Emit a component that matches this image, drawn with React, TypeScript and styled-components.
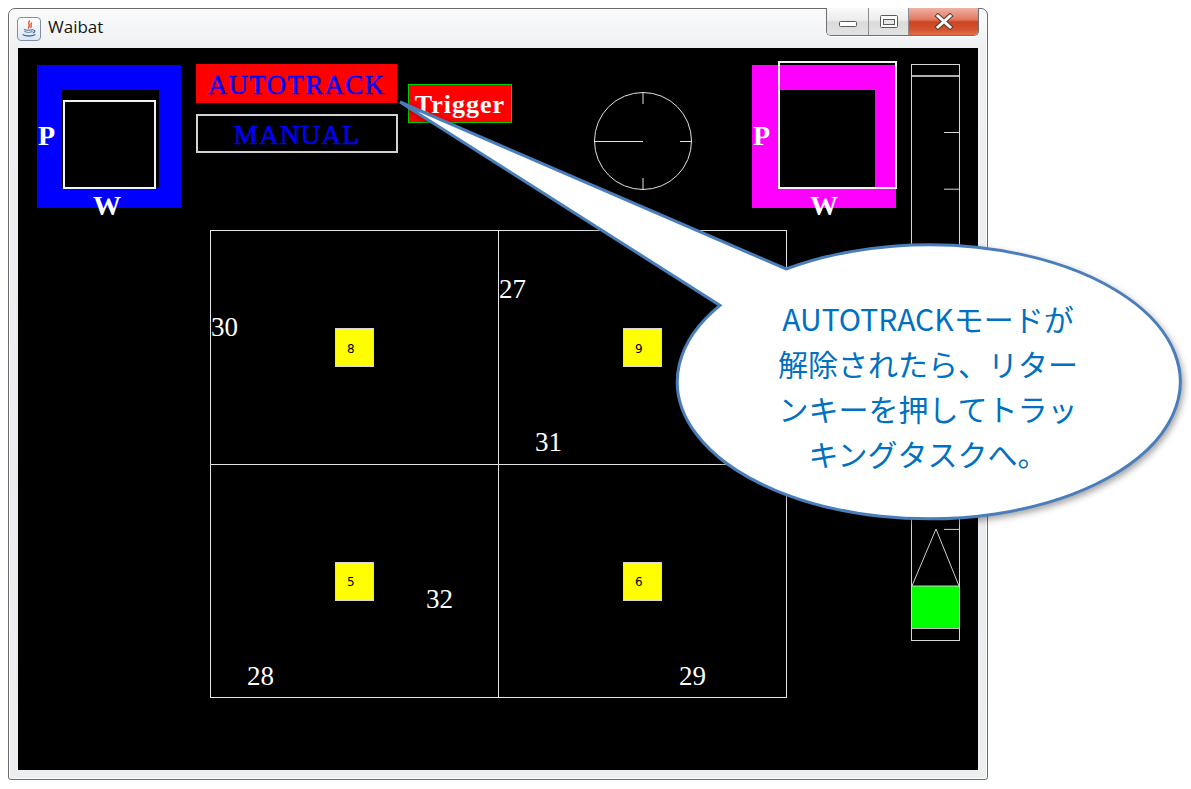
import React from "react";
import styled, { createGlobalStyle } from "styled-components";

const GlobalStyle = createGlobalStyle`
  html, body { margin: 0; padding: 0; background: #ffffff; }
  body { width: 1191px; height: 789px; overflow: hidden; font-family: "Liberation Serif", serif; }
  * { box-sizing: border-box; }
`;

const Page = styled.div`
  position: relative;
  width: 1191px;
  height: 789px;
  padding: 8px 0 0 8px;
`;

const Window = styled.div`
  width: 980px;
  height: 772px;
  display: flex;
  flex-direction: column;
  padding: 0 9px 9px 9px;
  border: 1px solid #6a6a6a;
  border-radius: 7px 7px 3px 3px;
  background: linear-gradient(180deg, #fbfbfc 0%, #eef0f2 5%, #e9ebee 60%, #eceef0 100%);
  box-shadow: inset 0 0 0 1px rgba(255, 255, 255, 0.85);
`;

const TitleBar = styled.div`
  flex: none;
  height: 39px;
  display: flex;
  align-items: flex-start;
`;

const AppIcon = styled.svg`
  flex: none;
  margin: 8px 0 0 -1px;
`;

const Title = styled.span`
  margin-left: 7px;
  font-family: "Open Sans", "Noto Sans", sans-serif;
  font-size: 17px;
  line-height: 35px;
  color: #141414;
`;

const Controls = styled.div`
  margin: -1px -1px 0 auto;
  height: 28px;
  display: flex;
  border: 1px solid #6f6f6f;
  border-top: none;
  border-radius: 0 0 5px 5px;
  overflow: hidden;
  box-shadow: 0 1px 0 rgba(255, 255, 255, 0.9);
`;

const CtrlButton = styled.div<{ $w: number; $close?: boolean }>`
  width: ${(p) => p.$w}px;
  display: flex;
  align-items: center;
  justify-content: center;
  background: ${(p) =>
    p.$close
      ? "linear-gradient(180deg, #efb2a3 0%, #e17a62 42%, #cc4423 52%, #d4532e 80%, #e0714c 100%)"
      : "linear-gradient(180deg, #fafafa 0%, #ececec 45%, #dadada 52%, #e3e3e3 100%)"};
  & + & {
    border-left: 1px solid #8c8c8c;
  }
`;

const Canvas = styled.div`
  position: relative;
  width: 960px;
  height: 722px;
  flex: none;
  background: #000000;
  display: flex;
  align-items: flex-start;
  padding: 17px 0 0 19px;
`;

const LeftArea = styled.div`
  width: 859px;
  display: flex;
  flex-direction: column;
`;

const TopRow = styled.div`
  height: 143px;
  display: flex;
  align-items: flex-start;
`;

const PWBox = styled.div<{ $color: string }>`
  position: relative;
  flex: none;
  width: 144px;
  height: 143px;
  background: ${(p) => p.$color};
`;

const Hole = styled.div<{ $left: number; $w: number }>`
  position: absolute;
  left: ${(p) => p.$left}px;
  top: 25px;
  width: ${(p) => p.$w}px;
  height: 97px;
  background: #000;
`;

const Frame = styled.div<{ $left: number; $top: number; $w: number; $h: number }>`
  position: absolute;
  left: ${(p) => p.$left}px;
  top: ${(p) => p.$top}px;
  width: ${(p) => p.$w}px;
  height: ${(p) => p.$h}px;
  border: 2px solid #f2f2f2;
`;

const BoxLetter = styled.span<{ $left: number; $top: number }>`
  position: absolute;
  left: ${(p) => p.$left}px;
  top: ${(p) => p.$top}px;
  font-family: "Liberation Serif", serif;
  font-weight: bold;
  font-size: 28px;
  line-height: 28px;
  color: #ffffff;
`;

const ModeColumn = styled.div`
  flex: none;
  margin: -1px 0 0 15px;
  display: flex;
  flex-direction: column;
  gap: 11px;
`;

const ModeButton = styled.div<{ $active?: boolean }>`
  width: ${(p) => (p.$active ? 201 : 202)}px;
  height: 39px;
  display: flex;
  align-items: center;
  justify-content: center;
  padding-top: 3px;
  background: ${(p) => (p.$active ? "#ff0000" : "#000000")};
  border: ${(p) => (p.$active ? "none" : "2px solid #d2d2d2")};
  font-family: "Liberation Serif", serif;
  font-size: 27px;
  letter-spacing: 1.3px;
  color: #0000ff;
  -webkit-text-stroke: 0.5px #0000ff;
`;

const Trigger = styled.div`
  flex: none;
  margin: 19px 0 0 10px;
  width: 104px;
  height: 39px;
  display: flex;
  align-items: center;
  justify-content: center;
  padding-top: 2px;
  background: #ff0000;
  border: 1px solid #00d000;
  font-family: "Liberation Serif", serif;
  font-weight: bold;
  font-size: 26px;
  letter-spacing: 1px;
  color: #ffffff;
`;

const Compass = styled.svg`
  flex: none;
  margin: 26px 0 0 81px;
`;

const MagentaSlot = styled.div`
  flex: none;
  margin-left: 59px;
`;

const ScaleBar = styled.svg`
  flex: none;
  margin: -1px 0 0 15px;
`;

const Field = styled.div`
  position: relative;
  margin: 22px 0 0 173px;
  width: 577px;
  height: 468px;
  display: grid;
  grid-template-columns: 288px 287px;
  grid-template-rows: 234px 232px;
  border: 1px solid #e4e4e4;
`;

const Cell = styled.div<{ $right?: boolean; $bottom?: boolean }>`
  display: flex;
  align-items: center;
  justify-content: center;
  border-right: ${(p) => (p.$right ? "1px solid #e4e4e4" : "none")};
  border-bottom: ${(p) => (p.$bottom ? "1px solid #e4e4e4" : "none")};
`;

const Target = styled.div`
  width: 39px;
  height: 39px;
  display: flex;
  align-items: center;
  padding-left: 11px;
  padding-top: 2px;
  background: #ffff00;
  border: 1px solid #d8d8d8;
  font-family: "DejaVu Sans", "Liberation Sans", sans-serif;
  font-size: 12px;
  color: #000;
`;

const Agent = styled.span<{ $x: number; $y: number }>`
  position: absolute;
  left: ${(p) => p.$x}px;
  top: ${(p) => p.$y}px;
  font-family: "Liberation Serif", serif;
  font-size: 27px;
  line-height: 27px;
  color: #ffffff;
`;

const BubbleShape = styled.svg`
  position: absolute;
  left: 0;
  top: 0;
  pointer-events: none;
  filter: drop-shadow(2px 3px 3px rgba(0, 0, 0, 0.35));
`;

const BubbleText = styled.div`
  position: absolute;
  left: 678px;
  top: 296px;
  width: 500px;
  text-align: center;
  font-family: "Noto Sans CJK JP", "Noto Sans", sans-serif;
  font-size: 30px;
  line-height: 45px;
  color: #0070c0;
`;

const Line = styled.div`
  white-space: nowrap;
`;

const agents = [
  { label: "30", x: 0, y: 83 },
  { label: "27", x: 288, y: 45 },
  { label: "31", x: 324, y: 198 },
  { label: "32", x: 215, y: 355 },
  { label: "28", x: 36, y: 432 },
  { label: "29", x: 468, y: 432 },
];

const cells = [
  { id: "8", right: true, bottom: true },
  { id: "9", right: false, bottom: true },
  { id: "5", right: true, bottom: false },
  { id: "6", right: false, bottom: false },
];

const ticks = Array.from({ length: 8 }, (_, k) => 68.5 + k * 56.7);

function JavaIcon() {
  return (
    <AppIcon width="24" height="24" viewBox="0 0 24 24">
      <defs>
        <linearGradient id="jg" x1="0" y1="0" x2="0" y2="1">
          <stop offset="0" stopColor="#ffffff" />
          <stop offset="1" stopColor="#dfe6ee" />
        </linearGradient>
      </defs>
      <rect x="0.5" y="0.5" width="23" height="23" rx="3.5" fill="url(#jg)" stroke="#7d8fa6" />
      <path d="M12.5 4 C10 6.5 14 7.5 11.5 11 M14.5 6 C13 7.5 15 8.5 13.8 10.5" stroke="#e2531f" strokeWidth="1.4" fill="none" strokeLinecap="round" />
      <path d="M7 12.5 C9 13.5 14 13.5 16 12.5" stroke="#3b6fb3" strokeWidth="1.2" fill="none" />
      <path d="M7.5 14.5 C9.5 15.5 13.5 15.5 15.5 14.5 M16 13 C18.5 13 18.5 15.5 15.8 15.8" stroke="#3b6fb3" strokeWidth="1.2" fill="none" />
      <path d="M5.5 17.5 C9 19.5 15 19.5 18.5 17.5" stroke="#3b6fb3" strokeWidth="1.3" fill="none" />
    </AppIcon>
  );
}

export default function App() {
  return (
    <>
      <GlobalStyle />
      <Page>
        <Window>
          <TitleBar>
            <JavaIcon />
            <Title>Waibat</Title>
            <Controls>
              <CtrlButton $w={41}>
                <svg width="20" height="12" viewBox="0 0 20 12">
                  <rect x="1.5" y="5.5" width="17" height="5" rx="1" fill="#ffffff" stroke="#5a5a5a" />
                </svg>
              </CtrlButton>
              <CtrlButton $w={40}>
                <svg width="20" height="15" viewBox="0 0 20 15">
                  <rect x="1.5" y="1.5" width="17" height="12" rx="1" fill="#ffffff" stroke="#5a5a5a" />
                  <rect x="4.5" y="5.5" width="11" height="5" fill="#e6e6e6" stroke="#5a5a5a" />
                </svg>
              </CtrlButton>
              <CtrlButton $w={70} $close>
                <svg width="20" height="17" viewBox="0 0 20 17">
                  <path d="M4 3 L16 14 M16 3 L4 14" stroke="#5c3a33" strokeWidth="5" strokeLinecap="square" />
                  <path d="M4 3 L16 14 M16 3 L4 14" stroke="#ffffff" strokeWidth="3" strokeLinecap="square" />
                </svg>
              </CtrlButton>
            </Controls>
          </TitleBar>

          <Canvas>
            <LeftArea>
              <TopRow>
                <PWBox $color="#0000ff">
                  <Hole $left={25} $w={97} />
                  <Frame $left={26} $top={35} $w={93} $h={89} />
                  <BoxLetter $left={1} $top={57}>P</BoxLetter>
                  <BoxLetter $left={56} $top={127}>W</BoxLetter>
                </PWBox>

                <ModeColumn>
                  <ModeButton $active>AUTOTRACK</ModeButton>
                  <ModeButton>MANUAL</ModeButton>
                </ModeColumn>

                <Trigger>Trigger</Trigger>

                <Compass width="100" height="100" viewBox="0 0 100 100">
                  <g stroke="#e2e2e2" strokeWidth="1" fill="none">
                    <circle cx="50" cy="50" r="48.5" />
                    <line x1="50" y1="1.5" x2="50" y2="13" />
                    <line x1="1.5" y1="50.5" x2="50" y2="50.5" />
                    <line x1="87" y1="50.5" x2="98.5" y2="50.5" />
                    <line x1="50" y1="87" x2="50" y2="98.5" />
                  </g>
                </Compass>

                <MagentaSlot>
                  <PWBox $color="#ff00ff">
                    <Hole $left={27} $w={96} />
                    <Frame $left={26} $top={-4} $w={119} $h={128} />
                    <BoxLetter $left={1} $top={57}>P</BoxLetter>
                    <BoxLetter $left={58} $top={127}>W</BoxLetter>
                  </PWBox>
                </MagentaSlot>
              </TopRow>

              <Field>
                {cells.map((c) => (
                  <Cell key={c.id} $right={c.right} $bottom={c.bottom}>
                    <Target>{c.id}</Target>
                  </Cell>
                ))}
                {agents.map((a) => (
                  <Agent key={a.label} $x={a.x} $y={a.y}>
                    {a.label}
                  </Agent>
                ))}
              </Field>
            </LeftArea>

            <ScaleBar width="50" height="578" viewBox="0 0 50 578">
              <rect x="0.5" y="0.5" width="48" height="576" fill="none" stroke="#d6d6d6" />
              <line x1="1" y1="12" x2="48" y2="12" stroke="#b0b0b0" strokeWidth="2" />
              {ticks.map((y) => (
                <line key={y} x1="33" y1={y} x2="48.5" y2={y} stroke="#d6d6d6" strokeWidth="1" />
              ))}
              <rect x="1" y="522" width="47" height="42" fill="#00ff00" />
              <polygon points="25,465 1,522 48,522" fill="none" stroke="#cfcfcf" strokeWidth="1" />
              <line x1="1" y1="564.5" x2="48" y2="564.5" stroke="#bdbdbd" strokeWidth="1" />
            </ScaleBar>
          </Canvas>
        </Window>

        <BubbleShape width="1191" height="789" viewBox="0 0 1191 789">
          <path
            d="M 786 269 A 251.5 137 0 1 1 720 305.4 L 400 102 Z"
            fill="#ffffff"
            stroke="#4a7ebb"
            strokeWidth="3"
            strokeLinejoin="miter"
          />
        </BubbleShape>
        <BubbleText>
          <Line>AUTOTRACKモードが</Line>
          <Line>解除されたら、リター</Line>
          <Line>ンキーを押してトラッ</Line>
          <Line>キングタスクへ。</Line>
        </BubbleText>
      </Page>
    </>
  );
}
